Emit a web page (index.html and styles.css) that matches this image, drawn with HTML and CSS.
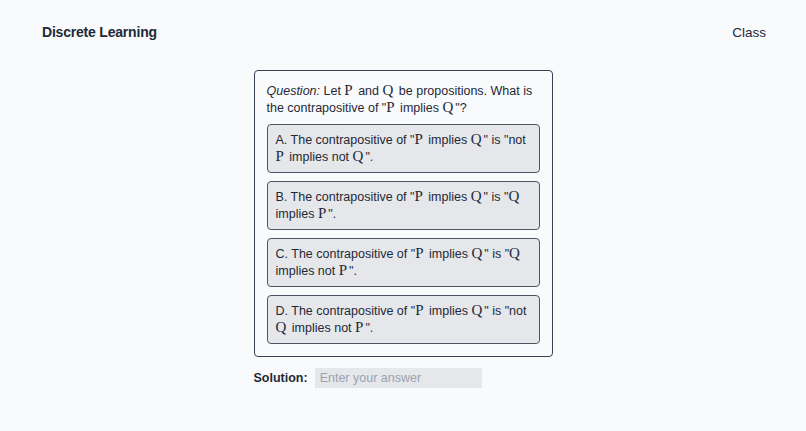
FILE: index.html
```html
<!DOCTYPE html>
<html lang="en">
<head>
    <meta charset="UTF-8">
    <meta name="viewport" content="width=device-width, initial-scale=1.0">
    <title>Discrete Learning</title>
    <link rel="stylesheet" href="styles.css">
</head>
<body>
    <header class="topbar">
        <span class="brand">Discrete Learning</span>
        <span class="nav-link">Class</span>
    </header>

    <main class="quiz">
        <div class="question-card">
            <p class="question"><em>Question:</em> Let <span class="m">P</span> and <span class="m">Q</span> be propositions. What is the contrapositive of "<span class="m">P</span> implies <span class="m">Q</span>"?</p>
            <div class="option">A. The contrapositive of "<span class="m">P</span> implies <span class="m">Q</span>" is "not <span class="m">P</span> implies not <span class="m">Q</span>".</div>
            <div class="option">B. The contrapositive of "<span class="m">P</span> implies <span class="m">Q</span>" is "<span class="m">Q</span> implies <span class="m">P</span>".</div>
            <div class="option">C. The contrapositive of "<span class="m">P</span> implies <span class="m">Q</span>" is "<span class="m">Q</span> implies not <span class="m">P</span>".</div>
            <div class="option">D. The contrapositive of "<span class="m">P</span> implies <span class="m">Q</span>" is "not <span class="m">Q</span> implies not <span class="m">P</span>".</div>
        </div>
        <div class="solution-row">
            <label class="solution-label" for="answer">Solution:</label>
            <input id="answer" class="answer-input" type="text" placeholder="Enter your answer">
        </div>
    </main>
</body>
</html>
```

FILE: styles.css
```css
body, html {
    margin: 0;
    padding: 0;
    width: 100%;
    height: 100%;
    background: #f9fafb;
    color: #1f2937;
    font-family: "Liberation Sans", Arial, sans-serif;
    font-size: 12.5px;
    line-height: 17px;
}

/* Top navigation */
.topbar {
    display: flex;
    justify-content: space-between;
    align-items: center;
    padding: 20px 40px 0 42px;
    height: 24px;
}

.brand {
    font-size: 14px;
    font-weight: 700;
    letter-spacing: -0.2px;
}

.nav-link {
    font-size: 13.5px;
}

/* Quiz */
.quiz {
    width: 299px;
    margin: 26px auto 0;
}

.question-card {
    border: 1px solid #374151;
    border-radius: 4px;
    padding: 12px;
    display: flex;
    flex-direction: column;
    gap: 8px;
}

.question {
    margin: 0 0 -1px;
}

.m {
    font-family: "Liberation Serif", "DejaVu Serif", serif;
    font-size: 15px;
    line-height: 10px;
    margin-right: 2px;
}

.option {
    background: #e5e7eb;
    border: 1px solid #4b5563;
    border-radius: 4px;
    padding: 6.5px 8px;
}

.solution-row {
    display: flex;
    align-items: center;
    gap: 7px;
    margin-top: 11px;
}

.solution-label {
    font-weight: 700;
}

.answer-input {
    width: 167px;
    height: 20px;
    box-sizing: border-box;
    border: none;
    outline: none;
    background: #e5e7eb;
    padding: 0 5px;
    font-family: inherit;
    font-size: 12.5px;
    color: #1f2937;
}

.answer-input::placeholder {
    color: #9ca3af;
}
```
